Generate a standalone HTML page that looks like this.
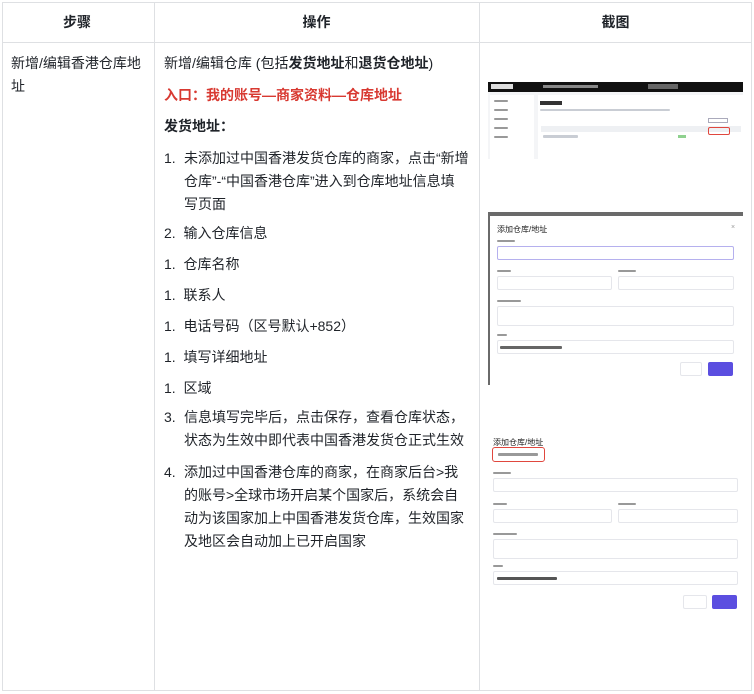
<!DOCTYPE html>
<html><head><meta charset="utf-8"><style>
*{margin:0;padding:0;box-sizing:border-box}
body{width:754px;height:694px;background:#fff;font-family:"Liberation Sans","Noto Sans CJK SC",sans-serif;color:#1f2329;font-size:14px;position:relative;overflow:hidden}
.a{position:absolute}
.l{position:absolute;background:#dee0e3}
.t{position:absolute;font-size:14px;line-height:23px;white-space:nowrap}
b{font-weight:700}
.sh{position:absolute;overflow:hidden}
.bx{position:absolute;border:1px solid #e5e6eb;border-radius:2px;background:#fff}
.g{position:absolute;background:#c9cdd4;height:3px;border-radius:1px}
</style></head><body>
<div class="l" style="left:2px;top:2px;width:750px;height:1px"></div>
<div class="l" style="left:2px;top:42px;width:750px;height:1px"></div>
<div class="l" style="left:2px;top:690px;width:750px;height:1px"></div>
<div class="l" style="left:2px;top:2px;width:1px;height:689px"></div>
<div class="l" style="left:154px;top:2px;width:1px;height:689px"></div>
<div class="l" style="left:479px;top:2px;width:1px;height:689px"></div>
<div class="l" style="left:751px;top:2px;width:1px;height:689px"></div>
<div class="t" style="left:0;width:154px;text-align:center;top:11px"><b>步骤</b></div>
<div class="t" style="left:154px;width:325px;text-align:center;top:11px"><b>操作</b></div>
<div class="t" style="left:479px;width:273px;text-align:center;top:11px"><b>截图</b></div>
<div class="t" style="left:11px;top:52px">新增/编辑香港仓库地<br>址</div>
<div class="t" style="left:164px;top:52px">新增/编辑仓库 (包括<b>发货地址</b>和<b>退货仓地址</b>)</div>
<div class="t" style="left:164px;top:84px;color:#d83931"><b>入口：我的账号—商家资料—仓库地址</b></div>
<div class="t" style="left:164px;top:115px"><b>发货地址：</b></div>
<div class="t" style="left:164px;top:147px">1.</div>
<div class="t" style="left:184px;top:147px">未添加过中国香港发货仓库的商家，点击“新增<br>仓库”-“中国香港仓库”进入到仓库地址信息填<br>写页面</div>
<div class="t" style="left:164px;top:222px">2.&nbsp;&nbsp;输入仓库信息</div>
<div class="t" style="left:164px;top:253px">1.&nbsp;&nbsp;仓库名称</div>
<div class="t" style="left:164px;top:284px">1.&nbsp;&nbsp;联系人</div>
<div class="t" style="left:164px;top:315px">1.&nbsp;&nbsp;电话号码（区号默认+852）</div>
<div class="t" style="left:164px;top:346px">1.&nbsp;&nbsp;填写详细地址</div>
<div class="t" style="left:164px;top:377px">1.&nbsp;&nbsp;区域</div>
<div class="t" style="left:164px;top:406px">3.</div>
<div class="t" style="left:184px;top:406px">信息填写完毕后，点击保存，查看仓库状态，<br>状态为生效中即代表中国香港发货仓正式生效</div>
<div class="t" style="left:164px;top:461px">4.</div>
<div class="t" style="left:184px;top:461px">添加过中国香港仓库的商家，在商家后台&gt;我<br>的账号&gt;全球市场开启某个国家后，系统会自<br>动为该国家加上中国香港发货仓库，生效国家<br>及地区会自动加上已开启国家</div>

<!-- shot 1 -->
<div class="sh" style="left:488px;top:82px;width:255px;height:77px;background:#f4f5f7">
 <div class="a" style="left:0;top:0;width:255px;height:10px;background:#111"></div>
 <div class="a" style="left:3px;top:2px;width:22px;height:5px;background:#ddd"></div>
 <div class="a" style="left:55px;top:3px;width:55px;height:3px;background:#888"></div>
 <div class="a" style="left:160px;top:2px;width:30px;height:5px;background:#666"></div>
 <div class="a" style="left:2px;top:13px;width:44px;height:64px;background:#fff"></div>
 <div class="g" style="left:6px;top:18px;width:14px;height:2px;background:#999"></div>
 <div class="g" style="left:6px;top:27px;width:14px;height:2px;background:#999"></div>
 <div class="g" style="left:6px;top:36px;width:14px;height:2px;background:#999"></div>
 <div class="g" style="left:6px;top:45px;width:14px;height:2px;background:#999"></div>
 <div class="g" style="left:6px;top:54px;width:14px;height:2px;background:#999"></div>
 <div class="a" style="left:50px;top:13px;width:205px;height:64px;background:#fff"></div>
 <div class="a" style="left:52px;top:19px;width:22px;height:4px;background:#333"></div>
 <div class="g" style="left:52px;top:27px;width:130px;height:2px"></div>
 <div class="a" style="left:53px;top:44px;width:200px;height:6px;background:#eef0f3"></div>
 <div class="g" style="left:55px;top:53px;width:35px"></div>
 <div class="a" style="left:190px;top:53px;width:8px;height:3px;background:#8fd18f"></div>
 <div class="a" style="left:220px;top:45px;width:22px;height:8px;border:1px solid #e0473e;border-radius:2px"></div>
 <div class="a" style="left:220px;top:36px;width:20px;height:5px;border:1px solid #aab"></div>
</div>
<!-- shot 2 -->
<div class="sh" style="left:488px;top:212px;width:255px;height:173px;background:#6a6a6a">
 <div class="a" style="left:2px;top:4px;width:253px;height:169px;background:#fff"></div>
 <div class="a" style="left:9px;top:12px;font-size:8px;color:#222">添加仓库/地址</div>
 <div class="a" style="left:243px;top:12px;font-size:7px;color:#999">×</div>
 <div class="g" style="left:9px;top:28px;width:18px;height:2px;background:#999"></div>
 <div class="bx" style="left:9px;top:34px;width:237px;height:14px;border-color:#b5b0ee"></div>
 <div class="g" style="left:9px;top:58px;width:14px;height:2px;background:#999"></div>
 <div class="g" style="left:130px;top:58px;width:18px;height:2px;background:#999"></div>
 <div class="bx" style="left:9px;top:64px;width:115px;height:14px"></div>
 <div class="bx" style="left:130px;top:64px;width:116px;height:14px"></div>
 <div class="g" style="left:9px;top:88px;width:24px;height:2px;background:#999"></div>
 <div class="bx" style="left:9px;top:94px;width:237px;height:20px"></div>
 <div class="g" style="left:9px;top:122px;width:10px;height:2px;background:#999"></div>
 <div class="bx" style="left:9px;top:128px;width:237px;height:14px"></div>
 <div class="g" style="left:12px;top:134px;width:62px;background:#666"></div>
 <div class="bx" style="left:192px;top:150px;width:22px;height:14px"></div>
 <div class="a" style="left:220px;top:150px;width:25px;height:14px;background:#5b4ee0;border-radius:2px"></div>
</div>
<!-- shot 3 -->
<div class="sh" style="left:488px;top:432px;width:255px;height:180px;background:#fff">
 <div class="a" style="left:5px;top:5px;font-size:8px;color:#222">添加仓库/地址</div>
 <div class="a" style="left:4px;top:15px;width:53px;height:15px;border:1.5px solid #e0473e;border-radius:3px"></div>
 <div class="g" style="left:10px;top:21px;width:40px;background:#999"></div>
 <div class="g" style="left:5px;top:40px;width:18px;height:2px;background:#999"></div>
 <div class="bx" style="left:5px;top:46px;width:245px;height:14px"></div>
 <div class="g" style="left:5px;top:71px;width:14px;height:2px;background:#999"></div>
 <div class="g" style="left:130px;top:71px;width:18px;height:2px;background:#999"></div>
 <div class="bx" style="left:5px;top:77px;width:119px;height:14px"></div>
 <div class="bx" style="left:130px;top:77px;width:120px;height:14px"></div>
 <div class="g" style="left:5px;top:101px;width:24px;height:2px;background:#999"></div>
 <div class="bx" style="left:5px;top:107px;width:245px;height:20px"></div>
 <div class="g" style="left:5px;top:133px;width:10px;height:2px;background:#999"></div>
 <div class="bx" style="left:5px;top:139px;width:245px;height:14px"></div>
 <div class="g" style="left:9px;top:145px;width:60px;background:#555"></div>
 <div class="bx" style="left:195px;top:163px;width:24px;height:14px"></div>
 <div class="a" style="left:224px;top:163px;width:25px;height:14px;background:#5b4ee0;border-radius:2px"></div>
</div>
</body></html>
